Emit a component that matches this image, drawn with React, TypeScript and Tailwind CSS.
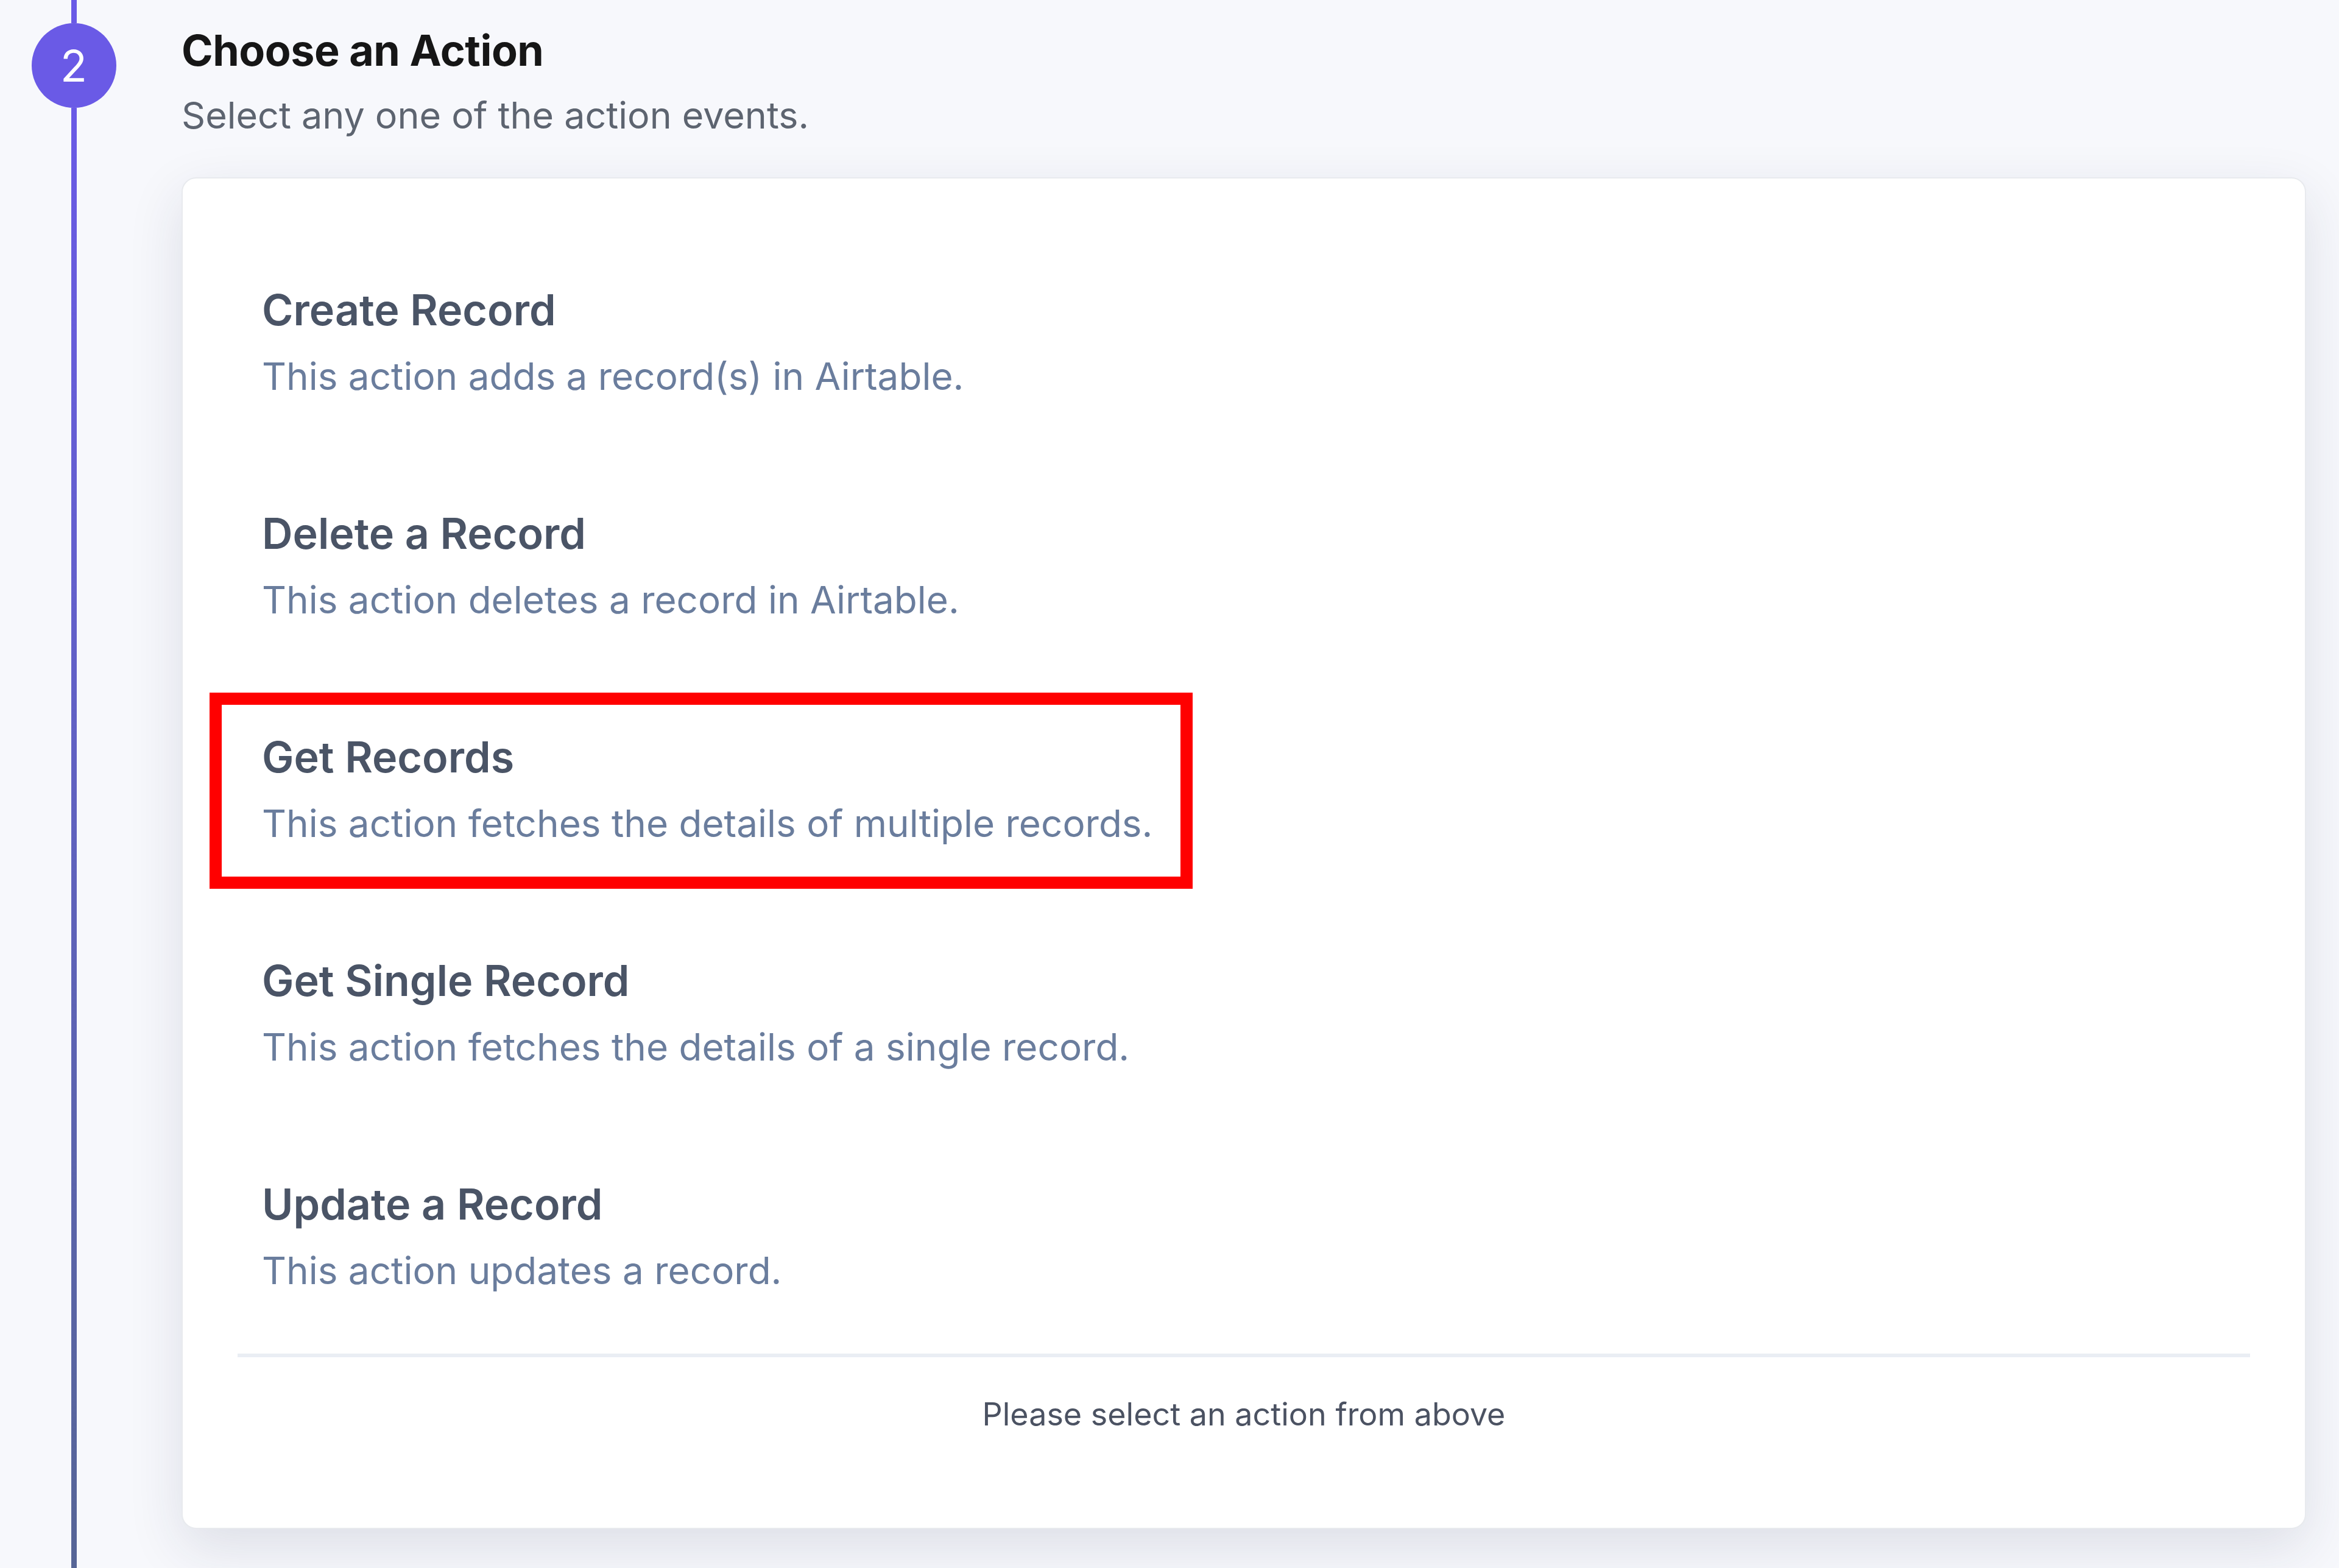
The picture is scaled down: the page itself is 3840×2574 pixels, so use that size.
const actions = [
  { title: "Create Record", desc: "This action adds a record(s) in Airtable." },
  { title: "Delete a Record", desc: "This action deletes a record in Airtable." },
  { title: "Get Records", desc: "This action fetches the details of multiple records.", marked: true },
  { title: "Get Single Record", desc: "This action fetches the details of a single record." },
  { title: "Update a Record", desc: "This action updates a record." },
]

const App = () => {
  return (
    <div className="flex min-h-[2574px] w-full bg-[#f7f8fc] font-['Inter','Liberation_Sans',sans-serif]">
      {/* step rail */}
      <div className="flex w-[242px] shrink-0 flex-col items-center">
        <div className="h-[38px] w-[9px] bg-[#6a5ae6]" />
        <div className="flex h-[139px] w-[139px] items-center justify-center rounded-full bg-[#6a5ae6] text-[72px] font-normal text-white">
          2
        </div>
        <div className="w-[9px] flex-1 bg-gradient-to-b from-[#6a5ae6] to-[#566596]" />
      </div>

      <div className="flex flex-1 flex-col pr-[54px] pl-[56px]">
        <h2 className="mt-[40px] text-[70px] leading-[86px] font-bold tracking-[-0.5px] text-[#161616]">
          Choose an Action
        </h2>
        <p className="mt-[24px] text-[61px] leading-[78px] text-[#5d6470]">
          Select any one of the action events.
        </p>

        <div className="mt-[63px] flex flex-col rounded-[24px] border-2 border-[#e8eaee] bg-white px-[90px] pt-[86px] pb-[150px] shadow-[0_30px_90px_rgba(30,40,70,0.12)]">
          {actions.map((a) => (
            <div key={a.title} className="relative flex h-[367px] flex-col justify-center px-[40px]">
              {a.marked && (
                <div className="pointer-events-none absolute top-[24px] left-[-46px] h-[322px] w-[1614px] border-[20px] border-[#ff0000]" />
              )}
              <h3 className="text-[70px] leading-[78px] font-semibold text-[#4a5466]">{a.title}</h3>
              <p className="mt-[32px] text-[62px] leading-[76px] text-[#6a7d9d]">{a.desc}</p>
            </div>
          ))}
          <div className="mt-[8px] h-[6px] bg-[#eaeef4]" />
          <p className="mt-[58px] text-center text-[52px] leading-[72px] text-[#4b5262]">
            Please select an action from above
          </p>
        </div>
      </div>
    </div>
  )
}

export default App
